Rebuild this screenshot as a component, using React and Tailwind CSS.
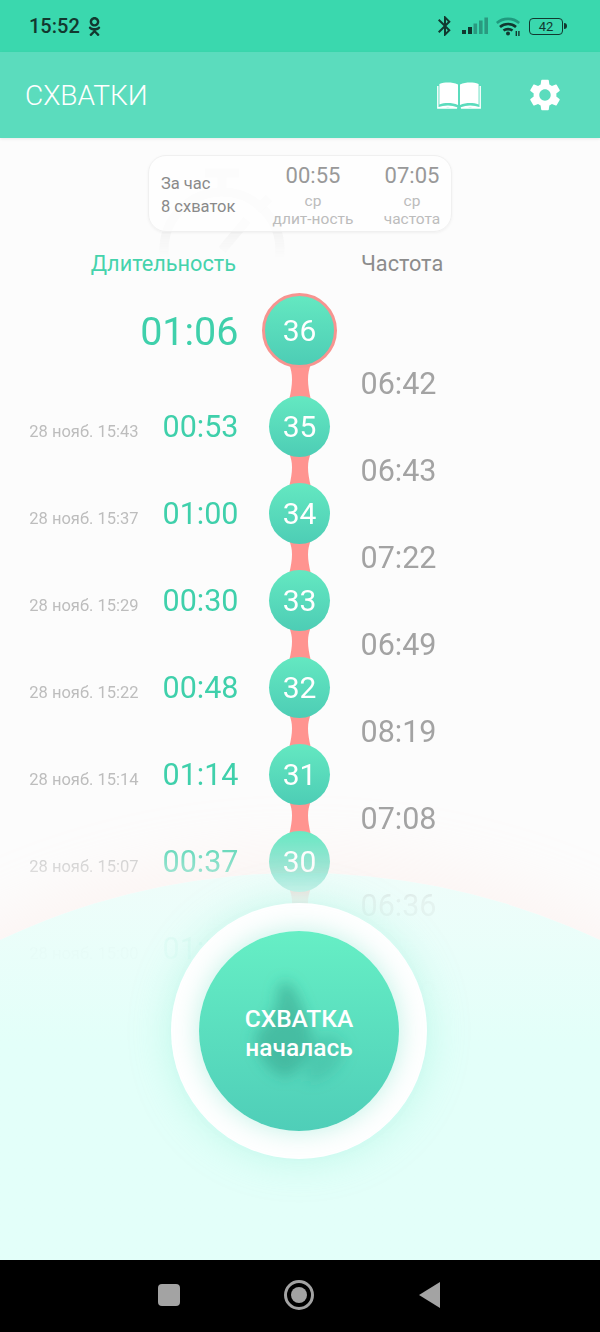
import React from "react";
import { FaOdnoklassniki } from "react-icons/fa";
import { MdSettings, MdBluetooth } from "react-icons/md";

const ROWS = [
  { n: 36, time: "01:06", big: true },
  { n: 35, time: "00:53", date: "28 нояб. 15:43" },
  { n: 34, time: "01:00", date: "28 нояб. 15:37" },
  { n: 33, time: "00:30", date: "28 нояб. 15:29" },
  { n: 32, time: "00:48", date: "28 нояб. 15:22" },
  { n: 31, time: "01:14", date: "28 нояб. 15:14" },
  { n: 30, time: "00:37", date: "28 нояб. 15:07" },
  { n: 29, time: "01:12", date: "28 нояб. 15:00" },
];
const FREQ = ["06:42", "06:43", "07:22", "06:49", "08:19", "07:08", "06:36", "06:59"];

const Connector = ({ h }) => (
  <svg width="32" height={h + 8} viewBox={`0 0 32 ${h + 8}`} className="-my-[4px] shrink-0">
    <path
      d={`M5 0 C9 ${h * 0.35} 9 ${h * 0.7} 5 ${h + 8} L27 ${h + 8} C23 ${h * 0.7} 23 ${h * 0.35} 27 0 Z`}
      fill="#ff9490"
    />
  </svg>
);

const Signal = () => (
  <svg width="26" height="18" viewBox="0 0 26 18">
    <rect x="0" y="13" width="4" height="4" fill="#12382f" />
    <rect x="6" y="10" width="4" height="7" fill="#12382f" />
    <rect x="11.5" y="6.5" width="3.6" height="10.5" fill="#2a9a80" />
    <rect x="17" y="3.5" width="3.6" height="13.5" fill="#2a9a80" />
    <rect x="22.4" y="0.5" width="3.6" height="16.5" fill="#2a9a80" />
  </svg>
);

const Wifi = () => (
  <svg width="24" height="19" viewBox="0 0 24 19" fill="none">
    <path d="M0.8 6 C7 0.5 17 0.5 23.2 6" stroke="#1f9a7e" strokeWidth="2.6" />
    <path d="M4 10 C8.5 6 15.5 6 20 10" stroke="#12382f" strokeWidth="2.6" />
    <path d="M7.5 13.6 C10 11.6 14 11.6 16.5 13.6" stroke="#12382f" strokeWidth="2.6" />
    <circle cx="12" cy="16.6" r="2" fill="#12382f" />
    <rect x="19.6" y="14" width="1.4" height="5" fill="#12382f" />
    <rect x="22.2" y="14" width="1.4" height="5" fill="#12382f" />
  </svg>
);

const Book = () => (
  <svg width="44" height="28" viewBox="0 0 44 28">
    <path d="M2.4 3 C8 1 15 1 21 3.5 V24 C15 21.5 8 21.5 2.4 23.5 Z" fill="#fff" />
    <path d="M23 3.5 C29 1 36 1 41.6 3 V23.5 C36 21.5 29 21.5 23 24 Z" fill="#fff" />
    <path d="M0.8 5 V27 H20 C15 25 7 25 0.8 27" fill="none" stroke="#fff" strokeWidth="1.4" />
    <path d="M43.2 5 V27 H24 C29 25 37 25 43.2 27" fill="none" stroke="#fff" strokeWidth="1.4" />
  </svg>
);

const Stopwatch = () => (
  <svg width="130" height="120" viewBox="0 0 130 120" fill="none" stroke="#f3f3f3" strokeWidth="9"
    className="absolute left-[157px] top-[30px] [mask-image:linear-gradient(to_bottom,#000_50%,transparent_75%)]">
    <path d="M48 5 H82 M65 5 V22" />
    <circle cx="65" cy="82" r="58" />
    <path d="M112 30 L100 42 M65 82 L90 52" />
  </svg>
);

const Silhouette = () => (
  <svg width="200" height="200" viewBox="0 0 200 200" className="absolute inset-0">
    <defs>
      <filter id="soft" x="-30%" y="-30%" width="160%" height="160%">
        <feGaussianBlur stdDeviation="7" />
      </filter>
    </defs>
    <g filter="url(#soft)" fill="#2f9d88">
      <path d="M86 50 C98 54 102 74 112 98 C116 118 106 138 88 146 C70 144 56 122 56 104 C66 92 78 82 78 66 C78 58 80 52 86 50 Z" opacity="0.5" />
      <path d="M112 112 C122 100 140 100 146 116 C146 134 128 152 106 150 Z" opacity="0.28" />
    </g>
  </svg>
);

export default function App() {
  return (
    <div className="relative w-[600px] h-[1332px] overflow-hidden flex flex-col bg-[#fcfcfc] font-['Roboto',sans-serif]">
      {/* status bar */}
      <div className="h-[52px] shrink-0 bg-[#3ad8ae] flex items-center justify-between pl-[29px] pr-[33px] text-[#12382f]">
        <div className="flex items-center gap-[5px]">
          <span className="text-[20px] font-medium leading-none">15:52</span>
          <FaOdnoklassniki size={19} />
        </div>
        <div className="flex items-center">
          <MdBluetooth size={24} />
          <div className="ml-[5px]"><Signal /></div>
          <div className="ml-[8px]"><Wifi /></div>
          <div className="flex items-center ml-[9px]">
            <div className="w-[34px] h-[17px] rounded-[4px] border-[1.5px] border-[#12382f] flex items-center justify-center text-[13px] leading-none">42</div>
            <div className="w-[3px] h-[6px] bg-[#12382f] ml-[1px] rounded-r-sm" />
          </div>
        </div>
      </div>

      {/* app bar */}
      <div className="relative z-10 h-[86px] shrink-0 bg-[#5bdcbd] flex items-center justify-between pl-[25px] pr-[36px] shadow-[0_1px_3px_rgba(0,0,0,0.08)]">
        <span className="text-[28px] font-light text-white leading-none pt-[2px]">СХВАТКИ</span>
        <div className="flex items-center gap-[45px]">
          <Book />
          <MdSettings size={38} color="#fff" />
        </div>
      </div>

      {/* main */}
      <div className="relative flex-1 flex flex-col items-center">
        {/* dome */}
        <div className="absolute left-[-405px] top-[735px] w-[1410px] h-[1410px] rounded-full bg-gradient-to-b from-[#effdfa] to-[#e3fff9] to-[12%] shadow-[0_-16px_60px_rgba(255,225,215,0.25)]" />
        <Stopwatch />

        {/* summary */}
        <div className="relative mt-[17px] w-[304px] h-[77px] shrink-0 rounded-[18px] border border-[#f0f0f0] bg-white/70 shadow-[0_1px_3px_rgba(0,0,0,0.05)] flex items-center pl-[12px]">
          <div className="w-[111px] shrink-0 text-[16.5px] leading-[23px] text-[#8a8a8a] pt-[2px] whitespace-nowrap">
            <div>За час</div>
            <div>8 схваток</div>
          </div>
          <div className="w-[82px] shrink-0 flex flex-col items-center pt-[4px] whitespace-nowrap">
            <span className="text-[22px] leading-[26px] text-[#999]">00:55</span>
            <span className="text-[15.5px] leading-[18px] text-[#bcbcbc] mt-[3px]">ср</span>
            <span className="text-[15.5px] leading-[18px] text-[#bcbcbc]">длит-ность</span>
          </div>
          <div className="w-[96px] shrink-0 -mr-[20px] ml-[10px] flex flex-col items-center pt-[4px] whitespace-nowrap">
            <span className="text-[22px] leading-[26px] text-[#999]">07:05</span>
            <span className="text-[15.5px] leading-[18px] text-[#bcbcbc] mt-[3px]">ср</span>
            <span className="text-[15.5px] leading-[18px] text-[#bcbcbc]">частота</span>
          </div>
        </div>

        {/* column titles */}
        <div className="relative w-full flex mt-[19px] text-[21.7px] leading-[25px] shrink-0">
          <div className="w-[236px] text-right text-[#45d3ac]">Длительность</div>
          <div className="ml-[125px] text-[#8c8c8c]">Частота</div>
        </div>

        {/* timeline */}
        <div className="relative w-full flex mt-[10px] [mask-image:linear-gradient(to_bottom,#000_543px,rgba(0,0,0,0.55)_583px,rgba(0,0,0,0.12)_613px,rgba(0,0,0,0.04)_663px,transparent_713px)]">
          <div className="w-[238.5px] shrink-0 flex flex-col">
            {ROWS.map((r) => (
              <div key={r.n} className={r.big ? "h-[96px] pb-[8px] flex items-center justify-end" : "h-[87px] flex items-center justify-end"}>
                {r.date && <span className="text-[16.5px] text-[#bdbdbd] mr-[24px] mt-[14px]">{r.date}</span>}
                <span className={r.big ? "text-[39.5px] text-[#3fd0ab] pt-[3px]" : "text-[30.5px] text-[#3fd0ab] pt-[3px]"}>{r.time}</span>
              </div>
            ))}
          </div>
          <div className="w-[122px] shrink-0 flex flex-col items-center pt-[7px]">
            {ROWS.map((r, i) => (
              <React.Fragment key={r.n}>
                <div className={r.big
                  ? "relative z-10 w-[75px] h-[75px] rounded-full border-[3px] border-[#f79490] bg-gradient-to-b from-[#64e8c1] to-[#4dcdb5] flex items-center justify-center text-[30px] text-white shrink-0"
                  : "relative z-10 w-[61px] h-[61px] rounded-full bg-gradient-to-b from-[#64e8c1] to-[#4dcdb5] flex items-center justify-center text-[30px] text-white shrink-0"}>
                  {r.n}
                </div>
                {i < ROWS.length - 1 && <Connector h={r.big ? 28 : 26} />}
              </React.Fragment>
            ))}
          </div>
          <div className="flex-1 flex flex-col pt-[53px]">
            {FREQ.map((f, i) => (
              <div key={i} className="h-[87px] flex items-center text-[30.5px] text-[#a3a3a3] pt-[3px]">{f}</div>
            ))}
          </div>
        </div>

        {/* start button */}
        <div className="absolute left-[171px] top-[765px] w-[256px] h-[256px] rounded-full bg-white shadow-[0_0_40px_rgba(120,235,205,0.35)] flex items-center justify-center">
          <div className="relative w-[200px] h-[200px] rounded-full bg-gradient-to-b from-[#66efc5] to-[#4fceb8] shadow-[0_0_26px_rgba(130,230,205,0.5)] overflow-hidden flex flex-col items-center justify-center pt-[3px] text-white text-[24.5px] leading-[29px]">
            <Silhouette />
            <span className="relative font-medium">СХВАТКА</span>
            <span className="relative font-medium">началась</span>
          </div>
        </div>
      </div>

      {/* nav bar */}
      <div className="relative h-[72px] shrink-0 bg-black flex items-center">
        <div className="absolute left-[158px] top-[24px] w-[22px] h-[22px] rounded-[4px] bg-[#a3a3a3]" />
        <div className="absolute left-[284px] top-[20px] w-[30px] h-[30px] rounded-full border-[3px] border-[#a3a3a3] flex items-center justify-center">
          <div className="w-[16px] h-[16px] rounded-full bg-[#a3a3a3]" />
        </div>
        <svg width="22" height="26" viewBox="0 0 22 26" className="absolute left-[419px] top-[22px]">
          <path d="M0 13 L21 0 V26 Z" fill="#a3a3a3" />
        </svg>
      </div>
    </div>
  );
}
